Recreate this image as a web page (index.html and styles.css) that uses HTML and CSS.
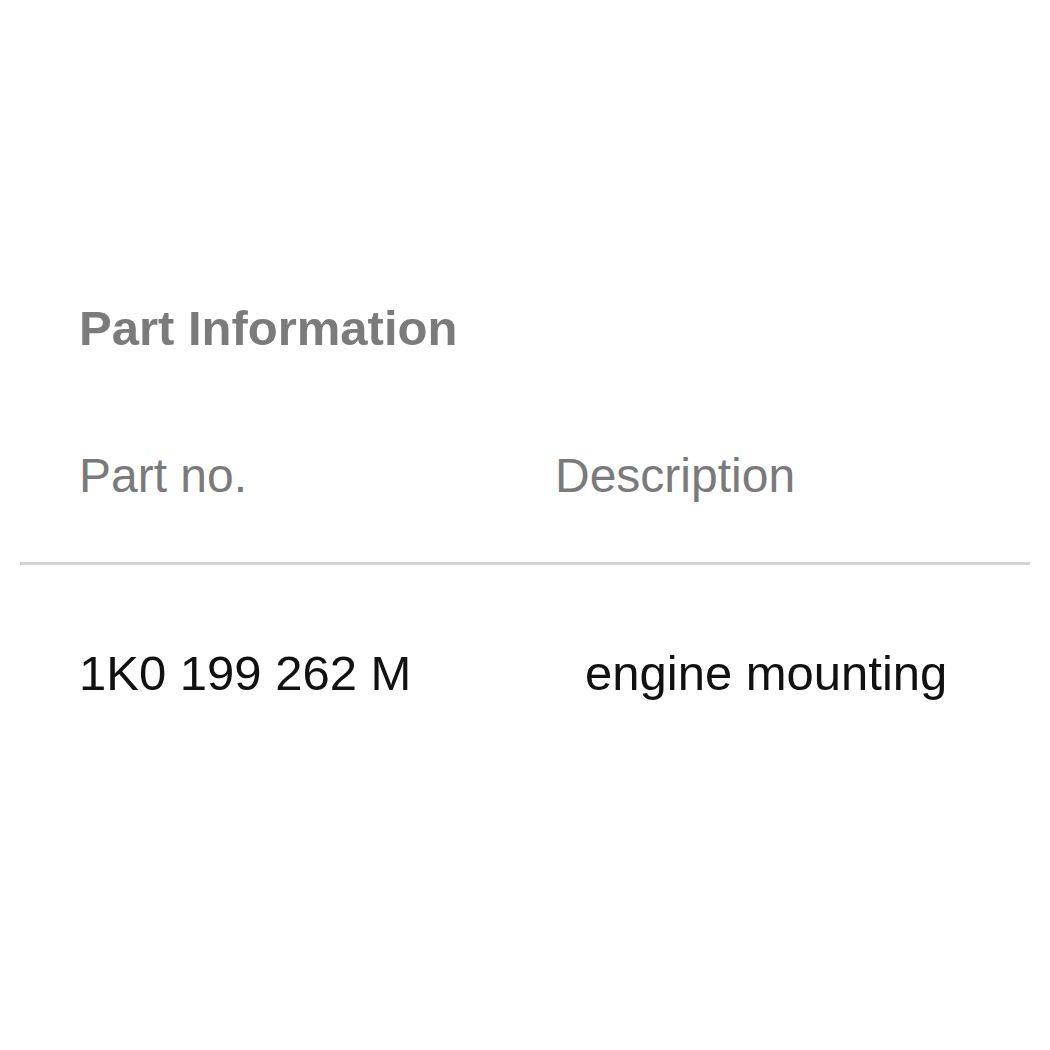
FILE: index.html
```html
<!DOCTYPE html>
<html lang="en">
<head>
    <meta charset="UTF-8">
    <title>Part Information</title>
    <link rel="stylesheet" href="styles.css">
</head>
<body>
    <div class="panel">
        <h2 class="title">Part Information</h2>

        <div class="head">
            <span class="col-no">Part no.</span>
            <span class="col-desc">Description</span>
        </div>

        <div class="divider"></div>

        <div class="row">
            <span class="cell-no">1K0 199 262 M</span>
            <span class="cell-desc">engine mounting</span>
        </div>
    </div>
</body>
</html>
```

FILE: styles.css
```css
body{
    margin: 0;
    background: #ffffff;
    font-family: "Liberation Sans", Arial, sans-serif;
}

.panel{
    padding-top: 300px;
}

.title{
    margin: 0;
    padding-left: 79px;
    font-size: 49px;
    line-height: 56px;
    font-weight: bold;
    color: #7b7b7b;
}

.head{
    display: flex;
    margin-top: 92px;
    padding-left: 79px;
    font-size: 48px;
    line-height: 56px;
    color: #7a7a7a;
}
.col-no{
    width: 476px;
}

.divider{
    height: 3px;
    margin: 58px 20px 0;
    background: #d2d2d2;
}

.row{
    display: flex;
    margin-top: 80px;
    padding-left: 79px;
    font-size: 49px;
    line-height: 56px;
    color: #111111;
}
.cell-no{
    width: 506px;
}
```
